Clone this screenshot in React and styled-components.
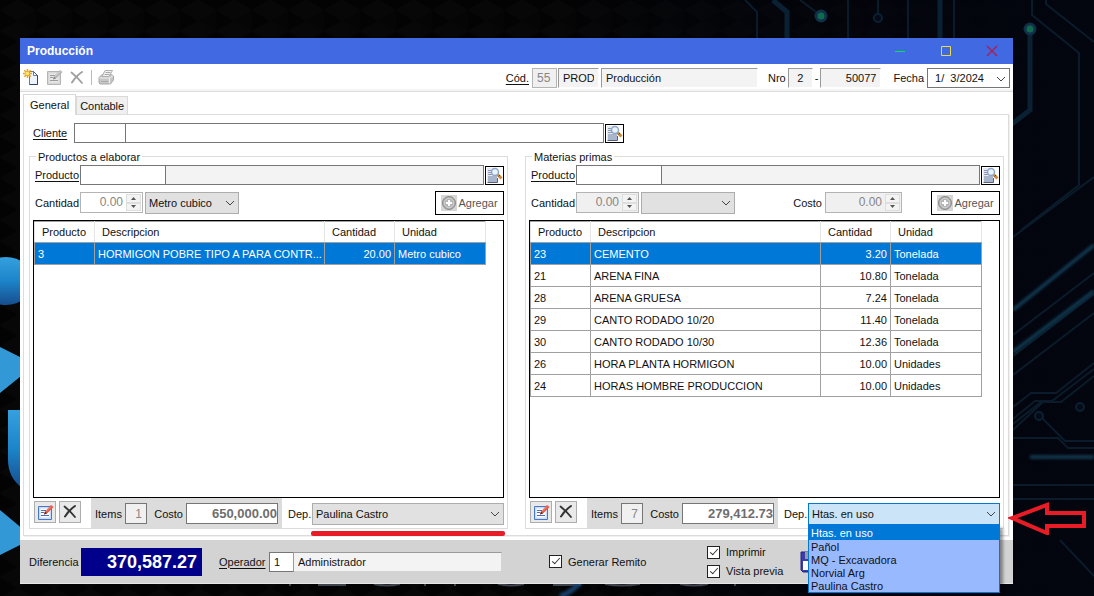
import React from 'react';
import styled, { createGlobalStyle, css } from 'styled-components';

const GlobalStyle = createGlobalStyle`
  *, *::before, *::after {
    box-sizing: border-box;
  }

  body {
    margin: 0;
    background: #030407;
  }

  body, button, input, select {
    font-family: "Liberation Sans", Arial, sans-serif;
    font-size: 11px;
    line-height: 14px;
    color: #111;
  }
`;

const productos = [
  ['3', 'HORMIGON POBRE TIPO A PARA CONTR...', '20.00', 'Metro cubico'],
];

const materias = [
  ['23', 'CEMENTO', '3.20', 'Tonelada'],
  ['21', 'ARENA FINA', '10.80', 'Tonelada'],
  ['28', 'ARENA GRUESA', '7.24', 'Tonelada'],
  ['29', 'CANTO RODADO 10/20', '11.40', 'Tonelada'],
  ['30', 'CANTO RODADO 10/30', '12.36', 'Tonelada'],
  ['26', 'HORA PLANTA HORMIGON', '10.00', 'Unidades'],
  ['24', 'HORAS HOMBRE PRODUCCION', '10.00', 'Unidades'],
];

const depositos = ['Htas. en uso', 'Pañol', 'MQ - Excavadora', 'Norvial Arg', 'Paulina Castro'];

const Desktop = styled.div`
  position: relative;
  display: flex;
  min-height: 100vh;
  padding: 38px 81px 12px 20px;
`;

const Wallpaper = styled.svg`
  position: absolute;
  inset: 0;
  width: 100%;
  height: 100%;
`;

const Window = styled.main`
  position: relative;
  display: flex;
  flex: 1;
  flex-direction: column;
  min-width: 0;
  background: #fff;
`;

const TitleBar = styled.header`
  display: flex;
  align-items: center;
  justify-content: space-between;
  height: 26px;
  padding: 0 12px 0 7px;
  background: #4169e1;
`;

const Title = styled.h1`
  margin: 0;
  font-size: 12px;
  font-weight: bold;
  color: #fff;
`;

const WindowButtons = styled.div`
  display: flex;
  gap: 28px;
`;

const PlainButton = styled.button`
  display: flex;
  align-items: center;
  justify-content: center;
  width: ${(p) => p.$width || 18}px;
  height: 18px;
  padding: 0;
  border: 0;
  background: none;
`;

const ToolBar = styled.div`
  display: flex;
  align-items: center;
  height: 28px;
  padding: 0 3px 0 2px;
  border-bottom: 1px solid #dcdcdc;
  box-shadow: inset 0 -2px #f4f4f4;
`;

const Tools = styled.div`
  display: flex;
  align-items: center;
  gap: 5px;
  margin-right: auto;
`;

const Separator = styled.span`
  width: 1px;
  height: 15px;
  background: #bbb;
`;

const Field = styled.div`
  display: flex;
  align-items: center;
  gap: ${(p) => p.$gap || 3}px;
  margin-right: ${(p) => p.$after || 0}px;
`;

const Label = styled.label`
  flex: none;
  width: ${(p) => (p.$width ? `${p.$width}px` : 'auto')};
  padding-left: ${(p) => (p.$width ? 2 : 0)}px;
  text-decoration: ${(p) => (p.$link ? 'underline' : 'none')};
  text-underline-offset: 2px;
  white-space: nowrap;
`;

const Input = styled.input`
  flex: ${(p) => (p.$width ? 'none' : '1')};
  width: ${(p) => (p.$width ? `${p.$width}px` : '0')};
  min-width: 0;
  height: ${(p) => p.$height || 20}px;
  padding: 0 4px;
  border: 1px solid #767676;
  border-radius: 0;
  outline: 0;
  background: ${(p) => (p.readOnly ? '#f3f3f3' : '#fff')};
  text-align: ${(p) => p.$align || 'left'};

  & + & {
    margin-left: -1px;
  }

  &:disabled {
    border-color: ${(p) => (p.$dark ? '#767676' : '#b4b4b4')};
    background: #f0f0f0;
    font-size: 12px;
    color: #868686;
  }

  ${(p) => p.$sunken && css`
    border-color: #9a9a9a transparent transparent #9a9a9a;
    background-clip: padding-box;
  `}
`;

const Amount = styled(Input)`
  padding: 0;
  background: #fff;
  font-size: 13px;
  font-weight: bold;
  color: #6e6e6e;
`;

const SelectBox = styled.div`
  position: relative;
  display: flex;
  flex: ${(p) => (p.$width ? 'none' : '1')};
  width: ${(p) => (p.$width ? `${p.$width}px` : 'auto')};

  > svg {
    position: absolute;
    top: 7px;
    right: 4px;
    pointer-events: none;
  }
`;

const Select = styled.select`
  appearance: none;
  width: 100%;
  height: 22px;
  padding: 0 3px;
  border: 1px solid ${(p) => (p.$open ? '#0078d7' : '#adadad')};
  border-radius: 0;
  outline: 0;
  background: ${(p) => (p.$open ? '#cce4f7' : '#e1e1e1')};
`;

const DropList = styled.ul`
  position: absolute;
  top: 22px;
  left: 0;
  right: 0;
  z-index: 2;
  margin: 0;
  padding: 0;
  border: 1px solid #0078d7;
  background: #99b9ff;
  box-shadow: 3px 3px 3px rgba(0, 0, 0, 0.4);
  list-style: none;
`;

const DropItem = styled.li`
  height: ${(p) => (p.$active ? 14 : 13)}px;
  padding-left: 2px;
  background: ${(p) => (p.$active ? '#0078d7' : 'transparent')};
  color: ${(p) => (p.$active ? '#fff' : '#111')};
`;

const Tabs = styled.div`
  display: flex;
  align-items: flex-end;
  height: 22px;
  padding-left: 3px;
`;

const Tab = styled.button`
  height: ${(p) => (p.$active ? 21 : 18)}px;
  margin-bottom: ${(p) => (p.$active ? -1 : 0)}px;
  padding: 0 ${(p) => (p.$active ? 6 : 3)}px;
  border: 1px solid #d9d9d9;
  border-bottom: 0;
  background: ${(p) => (p.$active ? '#fff' : '#f0f0f0')};
  z-index: ${(p) => (p.$active ? 1 : 0)};
`;

const Page = styled.section`
  display: flex;
  flex: 1;
  flex-direction: column;
  gap: 7px;
  margin: 0 4px 4px 3px;
  padding: 8px 4px 6px 5px;
  border: 1px solid #dcdcdc;
  box-shadow: 1px 1px #f0f0f0;
`;

const ClientRow = styled.div`
  display: flex;
  align-items: center;
  width: 61%;
  padding-left: 2px;
`;

const Columns = styled.div`
  display: grid;
  flex: 1;
  grid-template-columns: 1fr 1fr;
  gap: 17px;
`;

const Group = styled.fieldset`
  display: flex;
  flex-direction: column;
  min-width: 0;
  margin: 0;
  padding: 2px 3px 0;
  border: 1px solid #dcdcdc;
`;

const Legend = styled.legend`
  height: 13px;
  margin-left: 3px;
  padding: 0 2px;
`;

const Row = styled.div`
  display: flex;
  align-items: center;
`;

const SearchButton = styled.button`
  display: flex;
  flex: none;
  align-items: center;
  justify-content: center;
  width: 19px;
  height: 19px;
  margin-left: 1px;
  padding: 0;
  border: 1px solid #000;
  background: #fff;
`;

const QuantityRow = styled(Row)`
  gap: 2px;
  height: 23px;
  margin: 6px 0;
`;

const Spinner = styled.div`
  display: flex;
  width: ${(p) => p.$width}px;
  height: 21px;
  border: 1px solid #b4b4b4;
  background: ${(p) => (p.$gray ? '#f0f0f0' : '#fff')};

  input:disabled {
    flex: 1;
    height: 17px;
    padding: 0 2px;
    border: 0;
    background: none;
  }
`;

const Arrows = styled.span`
  display: flex;
  flex-direction: column;
  width: 15px;
  margin: 1px;

  button {
    display: flex;
    flex: 1;
    align-items: center;
    justify-content: center;
    padding: 0;
    border: 1px solid #dedede;
    background: #f3f3f3;
  }
`;

const AddButton = styled.button`
  display: flex;
  align-items: center;
  justify-content: center;
  gap: 1px;
  width: 69px;
  height: 24px;
  margin-left: ${(p) => (p.$afterCost ? 27 : 0)}px;
  padding: 0;
  border: 1px solid #000;
  background: #fff;
  color: #555;
`;

const Spacer = styled.span`
  flex: 1;
`;

const GridBox = styled.div`
  flex: 1;
  min-height: 180px;
  border: 1px solid #000;
`;

const Table = styled.table`
  width: calc(100% - 17px);
  border-collapse: collapse;
  table-layout: fixed;

  th, td {
    overflow: hidden;
    padding: 0 3px;
    border: 1px solid #a0a0a0;
    font-weight: normal;
    text-align: left;
    white-space: nowrap;
  }

  th {
    height: 21px;
    padding: 0 7px;
    border-color: #a0a0a0 #e5e5e5;
  }

  td {
    height: 22px;
  }

  td:nth-child(3) {
    text-align: right;
  }
`;

const TableRow = styled.tr`
  background: ${(p) => (p.$selected ? '#0078d7' : '#fff')};
  color: ${(p) => (p.$selected ? '#fff' : '#111')};
`;

const Summary = styled.div`
  display: flex;
  height: 30px;
`;

const Actions = styled.div`
  display: flex;
  gap: 3px;
  width: 58px;
  padding: 3px 0 0 1px;
`;

const ActionButton = styled(PlainButton)`
  width: 22px;
  height: 22px;
  border: 1px solid #adadad;
  background: #e9e9e9;
`;

const Totals = styled.div`
  display: flex;
  align-items: center;
  gap: 3px;
  width: 191px;
  padding: 1px 4px 0;
  background: #dcdcdc;

  label + input + label {
    margin-left: auto;
  }
`;

const Deposit = styled.div`
  position: relative;
  display: flex;
  flex: 1;
  align-items: center;
  gap: 1px;
  padding: 1px 0 0 4px;
`;

const RedLine = styled.span`
  position: absolute;
  right: -1px;
  bottom: -8px;
  width: 194px;
  height: 5px;
  border-radius: 2px;
  background: #e81c26;
`;

const RedArrow = styled.svg`
  position: absolute;
  top: 3px;
  left: 100%;
  margin-left: 8px;
`;

const Footer = styled.footer`
  display: flex;
  align-items: center;
  height: 44px;
  padding: 0 7px;
  border-bottom: 1px solid #e8e8e8;
  background: #d3d3d3;
`;

const Difference = styled.output`
  width: 121px;
  height: 28px;
  margin-right: 15px;
  padding: 4px 5px 0 0;
  background: #00008b;
  font-size: 18px;
  font-weight: bold;
  line-height: 20px;
  color: #fff;
  text-align: right;
`;

const Operator = styled.div`
  display: flex;
  align-items: center;
  width: 285px;
  margin-right: 47px;
`;

const Checks = styled.div`
  display: flex;
  flex-direction: column;
  gap: 4px;
  width: ${(p) => p.$width}px;
`;

const CheckLabel = styled.label`
  display: flex;
  align-items: center;
  gap: 6px;
  height: 15px;
  white-space: nowrap;
`;

const Checkbox = styled.input`
  appearance: none;
  width: 13px;
  height: 13px;
  margin: 0;
  border: 1px solid #222;
  background: #fff;

  &:checked::after {
    display: block;
    width: 4px;
    height: 8px;
    margin: 0 0 0 4px;
    border: solid #333;
    border-width: 0 1px 1px 0;
    transform: rotate(42deg);
    content: "";
  }
`;

const Chevron = () => (
  <svg width="10" height="8" viewBox="0 0 10 8" fill="none" stroke="#444">
    <path d="M1 2l4 4 4-4" />
  </svg>
);

const NewIcon = () => (
  <svg width="17" height="17" viewBox="0 0 17 17">
    <path d="M6.500 2.500h4l4 4v9h-8z" fill="#edf3fc" stroke="#6b7b99" />
    <path d="M10.500 2.500l4 4v9h-8" fill="none" stroke="#2f4468" />
    <path d="M10.500 3v3.500h3.500" fill="#fff" stroke="#6b7b99" />
    <path d="M4.500 0v9M0 4.500h9M1.300 1.300l6.400 6.400M7.700 1.300L1.300 7.700" stroke="#e9a512" strokeWidth="1.500" />
    <circle cx="4.500" cy="4.500" r="1.800" fill="#ffe87a" />
  </svg>
);

const NoteIcon = ({ gray }) => (
  <svg width="17" height="17" viewBox="0 0 17 17">
    <path d="M1.500 2.500h13v13h-13z" fill={gray ? '#d7d7d7' : '#c9dcf8'} stroke={gray ? '#b5b5b5' : '#4a78c8'} />
    <path d="M3.500 4.500h9v9h-9z" fill={gray ? '#e8e8e8' : '#fff'} />
    <path d="M4 6.500h5M4 8.500h3M4 11.500h8" stroke={gray ? '#9c9c9c' : '#4a6db5'} />
    <path d="M7 10.500l1-3 6-6.500 2.500 2-6.500 6.500z" fill={gray ? '#b4b4b4' : '#e2553f'} />
    <path d="M7 10.500l1-3 2 2z" fill={gray ? '#888' : '#5b2b22'} />
    <path d="M9 7.500l5-5" stroke={gray ? '#ddd' : '#f9a18e'} />
  </svg>
);

const DeleteIcon = ({ color }) => (
  <svg width="16" height="16" viewBox="0 0 16 16" fill="none" stroke={color} strokeLinecap="round">
    <path d="M2.500 2.500c3 2.500 7 6 10.500 10.500" strokeWidth="1.800" />
    <path d="M13 2c-4 2.500-7 6-10 10.500" strokeWidth="2" />
  </svg>
);

const PrinterIcon = () => (
  <svg width="17" height="17" viewBox="0 0 17 17" stroke="#aaa">
    <path d="M1 8.500l3-3h9.500l2 1.500v4l-3 4H2l-1-1z" fill="#c6c6c6" />
    <path d="M4 7.500l3-6h7.500l-3.500 6z" fill="#f1f1f1" stroke="#b0b0b0" />
    <path d="M1.500 9h10l3.500-2M11.500 9v5.500" fill="none" stroke="#eee" />
    <path d="M7.500 3.500h5M6.500 5.500h5M3 12.500h7" />
  </svg>
);

const SearchIcon = () => (
  <svg width="17" height="17" viewBox="0 0 17 17">
    <path d="M1 1h9v14H1z" fill="#e3e9f3" />
    <path d="M2 3.500h4M2 5.500h4M2 7.500h4" stroke="#8a99b5" />
    <path d="M2 9h9v6H2z" fill="#a9b5cb" />
    <path d="M1.500 15.500h10V11" fill="none" stroke="#52627f" />
    <path d="M11.500 7.500l4 4" stroke="#d08a35" strokeWidth="3" />
    <path d="M12.500 9.500l1.500-1.500" stroke="#5a432d" />
    <circle cx="9" cy="5" r="3.500" fill="#e8f4fd" stroke="#91a6c5" strokeWidth="1.500" />
  </svg>
);

const PlusIcon = () => (
  <svg width="16" height="16" viewBox="0 0 16 16">
    <path d="M0 0h16v16H0z" fill="#d6d6d6" />
    <circle cx="8" cy="8" r="6.500" fill="#aaa" stroke="#8c8c8c" />
    <circle cx="8" cy="8" r="4.800" fill="#b5b5b5" stroke="#d5d5d5" />
    <path d="M8 5v6M5 8h6" stroke="#fff" strokeWidth="2" />
  </svg>
);

const SaveIcon = () => (
  <svg width="22" height="22" viewBox="0 0 22 22">
    <path d="M1 1h20v20H3l-2-2z" fill="#3d3da5" stroke="#22228a" />
    <path d="M5 1h12v7H5z" fill="#99a" />
    <path d="M3 10h16v9H3z" fill="#fff" />
  </svg>
);

function Circuit() {
  return (
    <Wallpaper viewBox="0 0 1094 596" preserveAspectRatio="xMinYMin slice" aria-hidden="true">
      <defs>
        <pattern id="cubes" width="36" height="42" patternUnits="userSpaceOnUse">
          <path d="M0 10L18 0l18 10-18 11zM0 31l18-10 18 10-18 11z" fill="#070708" />
          <path d="M18 21l18-11v21z" fill="#050506" />
        </pattern>
        <linearGradient id="logo" x1="0" y1="0" x2="0" y2="1">
          <stop offset="0" stopColor="#35a0df" />
          <stop offset="0.500" stopColor="#1c84c9" />
          <stop offset="1" stopColor="#174d8e" />
        </linearGradient>
        <linearGradient id="night">
          <stop offset="0.500" stopColor="#020510" stopOpacity="0" />
          <stop offset="1" stopColor="#03050f" />
        </linearGradient>
        <filter id="glow" filterUnits="userSpaceOnUse" x="0" y="0" width="1094" height="596">
          <feGaussianBlur stdDeviation="1.500" />
        </filter>
      </defs>
      <path d="M0 0h1094v596H0z" fill="#030304" />
      <path d="M0 0h1094v596H0z" fill="url(#cubes)" />
      <path d="M0 0h1094v596H0z" fill="url(#night)" />
      <g fill="url(#logo)">
        <ellipse cx="6" cy="281" rx="27" ry="24" />
        <path d="M8 410h14v78c-9-7-14-16-14-28z" />
      </g>
      <path d="M0 347l26 13v12L0 393zM0 510l24 20v13L0 555z" fill="#3399d6" />
      <g fill="none" stroke="#0a1c2b" strokeWidth="2">
        <path d="M745 0l12 12v26M848 0v38M908 0v38M954 0v38M800 0l20 15M878 0v15" />
        <path d="M1032 0v15l47 38v132l-58 45M1046 0v4l48 38" />
        <path d="M1013 237l81-60M1013 335l81-62M1013 356l81-62M1013 375l81-62M1013 407l18-14h25l38-30M1013 419l22-18h17l42-32" />
        <path d="M1013 424l28-22h20l33-26M1013 438h45l10 10h26M1013 430l30-28h14M1013 485h81M1013 499h81M1040 416l25 25h29M1060 540l34 36" />
      </g>
      <g fill="none" stroke="#0a2133" strokeWidth="5">
        <path d="M773 0l14 12v26M940 0v38M1030 30v80l-18 14" />
      </g>
      <g fill="none" stroke="#12425c" strokeWidth="3" filter="url(#glow)">
        <path d="M1013 310l81-65M1013 352l81-61M1030 457h64" />
      </g>
      <g fill="#126a4e" stroke="#102f48" strokeWidth="3">
        <circle cx="821" cy="16" r="5" />
        <circle cx="1030" cy="29" r="5" />
      </g>
      <g fill="#050a16" stroke="#0a2133" strokeWidth="2">
        <circle cx="878" cy="18" r="4" />
        <circle cx="1039" cy="416" r="4" />
        <circle cx="1080" cy="407" r="4" />
      </g>
      <g fill="none" stroke="#3f434c" strokeWidth="2">
        <path d="M290 583v3M318 585h28M374 584q13 3 26 0M425 583v3M455 583v3M498 584q13 3 26 0M553 585h28M605 584q17 3 35 0M680 584q14 3 28 0M735 583v3" />
      </g>
      <path d="M560 596q12-3 24-18" stroke="#15406d" strokeWidth="5" filter="url(#glow)" />
    </Wallpaper>
  );
}

function NumberBox({ id, width, gray }) {
  return (
    <Spinner $width={width} $gray={gray}>
      <Input id={id} defaultValue="0.00" $align="right" disabled />
      <Arrows>
        <button type="button" aria-label="Subir" disabled>
          <svg width="5" height="3" viewBox="0 0 5 3"><path d="M0 3l2.500-3L5 3z" fill="#555" /></svg>
        </button>
        <button type="button" aria-label="Bajar" disabled>
          <svg width="5" height="3" viewBox="0 0 5 3"><path d="M0 0l2.500 3L5 0z" fill="#555" /></svg>
        </button>
      </Arrows>
    </Spinner>
  );
}

function DataGrid({ rows }) {
  return (
    <GridBox>
      <Table>
        <colgroup>
          <col style={{ width: 60 }} />
          <col />
          <col style={{ width: 70 }} />
          <col style={{ width: 91 }} />
        </colgroup>
        <thead>
          <tr>
            <th>Producto</th>
            <th>Descripcion</th>
            <th>Cantidad</th>
            <th>Unidad</th>
          </tr>
        </thead>
        <tbody>
          {rows.map((row, i) => (
            <TableRow key={row[0]} $selected={i === 0}>
              {row.map((cell, j) => <td key={j}>{cell}</td>)}
            </TableRow>
          ))}
        </tbody>
      </Table>
    </GridBox>
  );
}

function ProductGroup({ id, title, rows, unit, withCost, total, deposit, open }) {
  return (
    <Group>
      <Legend>{title}</Legend>
      <Row>
        <Label htmlFor={`${id}-producto`} $width={47} $link>Producto</Label>
        <Input id={`${id}-producto`} $width={86} />
        <Input aria-label="Nombre del producto" readOnly />
        <SearchButton type="button" aria-label="Buscar producto"><SearchIcon /></SearchButton>
      </Row>
      <QuantityRow>
        <Label htmlFor={`${id}-cantidad`} $width={45}>Cantidad</Label>
        <NumberBox id={`${id}-cantidad`} width={63} gray={withCost} />
        <SelectBox $width={94}>
          <Select aria-label="Unidad" defaultValue={unit}>
            <option>{unit}</option>
          </Select>
          <Chevron />
        </SelectBox>
        <Spacer />
        {withCost && (
          <Field>
            <Label htmlFor={`${id}-costo`}>Costo</Label>
            <NumberBox id={`${id}-costo`} width={77} gray />
          </Field>
        )}
        <AddButton type="button" $afterCost={withCost}><PlusIcon />Agregar</AddButton>
      </QuantityRow>
      <DataGrid rows={rows} />
      <Summary>
        <Actions>
          <ActionButton type="button" aria-label="Editar"><NoteIcon /></ActionButton>
          <ActionButton type="button" aria-label="Eliminar"><DeleteIcon color="#333" /></ActionButton>
        </Actions>
        <Totals>
          <Label htmlFor={`${id}-items`}>Items</Label>
          <Input id={`${id}-items`} $width={22} $height={21} $align="right" defaultValue={rows.length} $dark disabled />
          <Label htmlFor={`${id}-total`}>Costo</Label>
          <Amount id={`${id}-total`} $width={92} $height={21} $align="right" defaultValue={total} readOnly />
        </Totals>
        <Deposit>
          <Label htmlFor={`${id}-dep`} $width={25}>Dep.</Label>
          <SelectBox>
            <Select id={`${id}-dep`} defaultValue={deposit} $open={open}>
              {depositos.map((d) => <option key={d}>{d}</option>)}
            </Select>
            <Chevron />
            {open && (
              <DropList>
                {depositos.map((d) => <DropItem key={d} $active={d === deposit}>{d}</DropItem>)}
              </DropList>
            )}
          </SelectBox>
          {open ? (
            <RedArrow width="78" height="34" viewBox="0 0 78 34" fill="none" stroke="#e81c26" strokeWidth="4">
              <path d="M4 17l35-13v8h37v13H39v7z" />
            </RedArrow>
          ) : <RedLine />}
        </Deposit>
      </Summary>
    </Group>
  );
}

const App = () => {
  return (
    <Desktop>
      <GlobalStyle />
      <Circuit />
      <Window>
        <TitleBar>
          <Title>Producción</Title>
          <WindowButtons>
            <PlainButton type="button" aria-label="Minimizar">
              <svg width="12" height="12"><path d="M1 6h10v1H1z" fill="#00e64d" /></svg>
            </PlainButton>
            <PlainButton type="button" aria-label="Maximizar">
              <svg width="12" height="12"><path d="M1.500 1.500h9v9h-9z" fill="none" stroke="#e8dc4a" /></svg>
            </PlainButton>
            <PlainButton type="button" aria-label="Cerrar">
              <svg width="12" height="12"><path d="M1 1l10 10M11 1L1 11" stroke="#a3245a" strokeWidth="1.500" /></svg>
            </PlainButton>
          </WindowButtons>
        </TitleBar>

        <ToolBar>
          <Tools>
            <PlainButton type="button" aria-label="Nuevo"><NewIcon /></PlainButton>
            <PlainButton type="button" aria-label="Modificar"><NoteIcon gray /></PlainButton>
            <PlainButton type="button" aria-label="Borrar"><DeleteIcon color="#a0a0a0" /></PlainButton>
            <Separator />
            <PlainButton type="button" aria-label="Imprimir comprobante"><PrinterIcon /></PlainButton>
          </Tools>
          <Field $after={1}>
            <Label htmlFor="codigo" $link>Cód.</Label>
            <Input id="codigo" $width={25} $align="left" defaultValue="55" disabled />
          </Field>
          <Field $after={10}>
            <Input aria-label="Tipo" $width={41} defaultValue="PROD" readOnly $sunken />
            <Input aria-label="Comprobante" $width={157} defaultValue="Producción" readOnly $sunken />
          </Field>
          <Field $after={12} $gap={2}>
            <Label htmlFor="nro">Nro</Label>
            <Input id="nro" $width={25} $align="center" defaultValue="2" readOnly $sunken />
            <span>-</span>
            <Input aria-label="Número" $width={61} $align="right" defaultValue="50077" readOnly $sunken />
          </Field>
          <Field>
            <Label htmlFor="fecha">Fecha</Label>
            <SelectBox $width={83}>
              <Input id="fecha" $width={83} defaultValue=" 1/  3/2024" />
              <Chevron />
            </SelectBox>
          </Field>
        </ToolBar>

        <Tabs role="tablist">
          <Tab type="button" role="tab" aria-selected="true" $active>General</Tab>
          <Tab type="button" role="tab" aria-selected="false">Contable</Tab>
        </Tabs>

        <Page>
          <ClientRow>
            <Label htmlFor="cliente" $width={43} $link>Cliente</Label>
            <Input id="cliente" $width={52} />
            <Input aria-label="Nombre del cliente" />
            <SearchButton type="button" aria-label="Buscar cliente"><SearchIcon /></SearchButton>
          </ClientRow>
          <Columns>
            <ProductGroup
              id="elaborar"
              title="Productos a elaborar"
              rows={productos}
              unit="Metro cubico"
              total="650,000.00"
              deposit="Paulina Castro"
            />
            <ProductGroup
              id="materias"
              title="Materias primas"
              rows={materias}
              unit=""
              total="279,412.73"
              deposit="Htas. en uso"
              withCost
              open
            />
          </Columns>
        </Page>

        <Footer>
          <Label htmlFor="diferencia" $width={54}>Diferencia</Label>
          <Difference id="diferencia">370,587.27</Difference>
          <Operator>
            <Label htmlFor="operador" $width={52} $link>Operador</Label>
            <Input id="operador" $width={25} defaultValue="1" />
            <Input aria-label="Nombre del operador" defaultValue="Administrador" readOnly $sunken />
          </Operator>
          <Checks $width={158}>
            <CheckLabel><Checkbox type="checkbox" defaultChecked />Generar Remito</CheckLabel>
          </Checks>
          <Checks $width={93}>
            <CheckLabel><Checkbox type="checkbox" defaultChecked />Imprimir</CheckLabel>
            <CheckLabel><Checkbox type="checkbox" defaultChecked />Vista previa</CheckLabel>
          </Checks>
          <PlainButton type="button" aria-label="Guardar" $width={22}><SaveIcon /></PlainButton>
        </Footer>
      </Window>
    </Desktop>
  );
};

export default App;
